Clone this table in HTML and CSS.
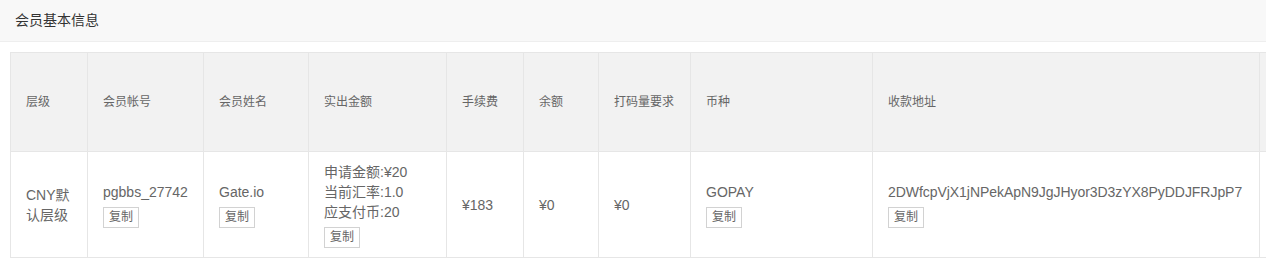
FILE: index.html
```html
<!DOCTYPE html>
<html lang="zh">
<head>
<meta charset="utf-8">
<link rel="stylesheet" href="styles.css">
</head>
<body>
<div class="panel-head">会员基本信息</div>
<div class="panel-body">
  <table class="info-table">
    <colgroup>
      <col style="width:77px">
      <col style="width:116px">
      <col style="width:105px">
      <col style="width:138px">
      <col style="width:77px">
      <col style="width:75px">
      <col style="width:92px">
      <col style="width:182px">
      <col style="width:387px">
      <col style="width:120px">
    </colgroup>
    <thead>
      <tr>
        <th>层级</th>
        <th>会员帐号</th>
        <th>会员姓名</th>
        <th>实出金额</th>
        <th>手续费</th>
        <th>余额</th>
        <th>打码量要求</th>
        <th>币种</th>
        <th>收款地址</th>
        <th></th>
      </tr>
    </thead>
    <tbody>
      <tr>
        <td>CNY默认层级</td>
        <td><div>pgbbs_27742</div><button class="copy-btn">复制</button></td>
        <td><div>Gate.io</div><button class="copy-btn">复制</button></td>
        <td><div>申请金额:¥20</div><div>当前汇率:1.0</div><div>应支付币:20</div><button class="copy-btn">复制</button></td>
        <td>¥183</td>
        <td>¥0</td>
        <td>¥0</td>
        <td><div>GOPAY</div><button class="copy-btn">复制</button></td>
        <td><div class="nowrap">2DWfcpVjX1jNPekApN9JgJHyor3D3zYX8PyDDJFRJpP7</div><button class="copy-btn">复制</button></td>
        <td></td>
      </tr>
    </tbody>
  </table>
</div>
</body>
</html>
```

FILE: styles.css
```css
html, body {
  margin: 0;
  padding: 0;
  background: #fff;
  overflow: hidden;
}
body {
  font-family: "Liberation Sans", Arial, "Noto Sans CJK SC", sans-serif;
  color: #666;
  width: 1266px;
}
.panel-head {
  height: 42px;
  line-height: 40px;
  padding: 0 15px;
  background: #f8f8f8;
  border-bottom: 1px solid #eeeeee;
  font-size: 14px;
  color: #333;
  box-sizing: border-box;
}
.panel-body {
  padding: 10px;
}
.info-table {
  border-collapse: collapse;
  table-layout: fixed;
  width: 1369px;
  font-size: 14px;
  line-height: 20px;
}
.info-table th,
.info-table td {
  border: 1px solid #e6e6e6;
  padding: 9px 15px;
  text-align: left;
  vertical-align: middle;
}
.info-table th {
  background: #f2f2f2;
  font-weight: normal;
  font-size: 12px;
  height: 80px;
  color: #666;
}
.info-table td {
  height: 87px;
  color: #666;
  word-break: break-all;
}
.nowrap {
  white-space: nowrap;
  letter-spacing: -0.05px;
}
.copy-btn {
  display: block;
  margin-top: 5px;
  height: 21px;
  padding: 0 5px;
  border: 1px solid #d2d2d2;
  background: #fff;
  color: #666;
  font-family: "Liberation Sans", Arial, "Noto Sans CJK SC", sans-serif;
  font-size: 12px;
  line-height: 19px;
  cursor: pointer;
}
```
